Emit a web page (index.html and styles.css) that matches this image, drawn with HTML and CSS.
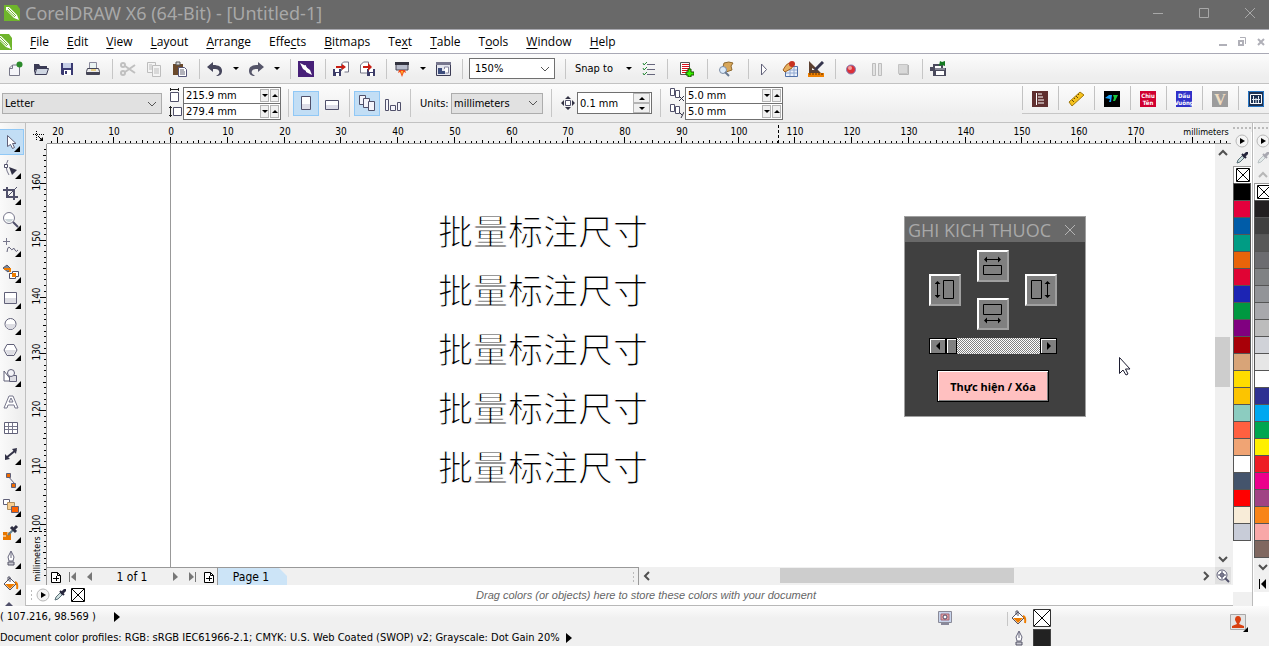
FILE: index.html
```html
<!DOCTYPE html>
<html lang="en">
<head>
<meta charset="UTF-8">
<meta name="viewport" content="width=device-width, initial-scale=1.0">
<title>CorelDRAW X6 (64-Bit) - [Untitled-1]</title>
<link rel="stylesheet" href="styles.css">
</head>
<body>

<!-- shared icons -->
<svg class="defs" width="0" height="0">
    <symbol id="logo" viewBox="0 0 16 16"><path d="M0 0H13L16 4V16H0z" fill="#6fb52c"/><path d="M2 2l3 0 8 8 2 5-5-2-8-8z" fill="#fff"/><path d="M4 3l8 8M3 5l8 7" stroke="#6fb52c" stroke-width="1"/></symbol>
    <symbol id="play" viewBox="0 0 14 14"><circle cx="7" cy="7" r="6" fill="#f4f4f4" stroke="#b8b8b8"/><path d="M5 4l5 3-5 3z" fill="#000"/></symbol>
    <symbol id="dropper" viewBox="0 0 14 14"><path d="M2 12l1-3 5-5 2 2-5 5z" fill="#cfe0e0" stroke="#5a7078"/><path d="M7 3l4 4M8 6l4-4" stroke="#26263c" stroke-width="2"/><path d="M8 4l3-3h2v2l-3 3z" fill="#26263c"/></symbol>
    <symbol id="nofill" viewBox="0 0 16 16"><path d="M1.500 1.500h13v13h-13z" fill="#fff" stroke="#000"/><path d="M2 2l12 12M14 2L2 14" stroke="#000"/></symbol>
    <symbol id="bucket" viewBox="0 0 16 16"><path d="M7 2l6 6-6 6-6-6z" fill="#fff" stroke="#555566"/><path d="M2 8h10l-5 5z" fill="#ef7d00"/><path d="M5 5V1h2v5" fill="none" stroke="#555566"/><path d="M12 6q3 1 2 7" fill="none" stroke="#ef7d00" stroke-width="2"/></symbol>
    <symbol id="pen" viewBox="0 0 16 16"><path d="M8 1l3 6-1 4H6L5 7z" fill="#fff" stroke="#66667c"/><path d="M8 2v6" stroke="#66667c"/><path d="M5 12h6v3H5z" fill="#c8c8d0" stroke="#555566"/></symbol>
    <symbol id="duplicate" viewBox="0 0 14 14"><path d="M.5.5h4v7h-4zM5.500 2.500h4v7h-4z" fill="#fff" stroke="#50506a"/></symbol>
    <symbol id="addpage" viewBox="0 0 12 12"><path d="M1.500 1.500h6l3 3v7h-9zM7.500 1.500v3h3" fill="#fff" stroke="#000"/><path d="M3 7.500h6M6.500 5v5" stroke="#000"/></symbol>
    <symbol id="chev" viewBox="0 0 10 10"><path d="M1 3l4 4 4-4" fill="none" stroke="currentColor" stroke-width="2"/></symbol>
</svg>

<!-- title bar -->
<header class="titlebar">
    <svg class="icon" viewBox="0 0 16 16"><use href="#logo"/></svg>
    <h1>CorelDRAW X6 (64-Bit) - [Untitled-1]</h1>
    <div class="win-buttons">
        <button aria-label="Minimize"><svg width="12" height="12"><path d="M1 6.500h10" stroke="#a8a8a8"/></svg></button>
        <button aria-label="Maximize"><svg width="12" height="12"><path d="M1.500 1.500h9v9h-9z" fill="none" stroke="#a8a8a8"/></svg></button>
        <button aria-label="Close"><svg width="12" height="12"><path d="M1 1l10 10M11 1L1 11" stroke="#a8a8a8"/></svg></button>
    </div>
</header>

<!-- menu -->
<nav class="menubar">
    <svg class="icon" viewBox="0 0 16 16"><use href="#logo"/></svg>
    <a href="#"><u>F</u>ile</a>
    <a href="#"><u>E</u>dit</a>
    <a href="#"><u>V</u>iew</a>
    <a href="#"><u>L</u>ayout</a>
    <a href="#"><u>A</u>rrange</a>
    <a href="#">Effe<u>c</u>ts</a>
    <a href="#"><u>B</u>itmaps</a>
    <a href="#">Te<u>x</u>t</a>
    <a href="#"><u>T</u>able</a>
    <a href="#">T<u>o</u>ols</a>
    <a href="#"><u>W</u>indow</a>
    <a href="#"><u>H</u>elp</a>
    <div class="doc-buttons">
        <button aria-label="Minimize document"><svg width="10" height="10"><path d="M1 8h8" stroke="#b0b0b8" stroke-width="2"/></svg></button>
        <button aria-label="Restore document"><svg width="10" height="10"><path d="M2 4h4v4H2z" fill="none" stroke="#b0b0b8" stroke-width="2"/><path d="M3 .5h5.500V7" fill="none" stroke="#b0b0b8"/></svg></button>
        <button aria-label="Close document"><svg width="10" height="10"><path d="M2 2l6 6M8 2L2 8" stroke="#b0b0b8" stroke-width="2"/></svg></button>
    </div>
</nav>

<!-- standard toolbar -->
<div class="toolbar">
    <button class="tool" aria-label="New"><svg class="icon" viewBox="0 0 16 16"><path d="M2.500 14.500V7l3-3h7v10.500z" fill="#f4f4f8" stroke="#777788"/><path d="M2.500 7.500h3V4" fill="none" stroke="#777788"/><circle cx="12.500" cy="3.500" r="3" fill="#2b8a2b"/></svg></button>
    <button class="tool" aria-label="Open"><svg class="icon" viewBox="0 0 16 16"><path d="M1 3h5l1 2h7v4H1z" fill="#3b3b55"/><path d="M1 3v10l2-6h11" fill="#3b3b55"/><path d="M3.500 7.500h12l-2 6H2z" fill="#cfd6e2" stroke="#3b3b55"/></svg></button>
    <button class="tool" aria-label="Save"><svg class="icon" viewBox="0 0 16 16"><path d="M2 2h12v12H3l-1-1z" fill="#3a3a72"/><path d="M4 2h8v5H4z" fill="#c5cee6"/><path d="M5 9h7v5H5z" fill="#fff"/><path d="M6 10h2v3H6z" fill="#3a3a72"/></svg></button>
    <button class="tool" aria-label="Print"><svg class="icon" viewBox="0 0 16 16"><path d="M4.500 8V1.500h7V8" fill="#eaf3f1" stroke="#8a8a9c"/><path d="M2.500 7.500h11l1 3v3h-13v-3z" fill="#ececec" stroke="#444455"/><path d="M2 12h12" stroke="#444455" stroke-width="2"/><path d="M6 9h5" stroke="#e0b020"/></svg></button>
    <span class="sep"></span>
    <button class="tool" aria-label="Cut"><svg class="icon" viewBox="0 0 16 16"><g fill="none" stroke="#c0c0c0" stroke-width="2"><circle cx="3" cy="4" r="2"/><circle cx="3" cy="12" r="2"/><path d="M5 5l10 7M5 11l10-7"/></g></svg></button>
    <button class="tool" aria-label="Copy"><svg class="icon" viewBox="0 0 16 16"><g fill="#f4f4f4" stroke="#bdbdbd"><path d="M1.500 1.500h8v10h-8z"/><path d="M6.500 4.500h8v11h-8z"/><path d="M3 4h3M3 6h3M3 8h3M8 8h5M8 10h5M8 12h5"/></g></svg></button>
    <button class="tool" aria-label="Paste"><svg class="icon" viewBox="0 0 16 16"><path d="M1 3h10v11H1z" fill="#6b4a2b"/><path d="M4 1h4v3H4z" fill="#ddd" stroke="#555"/><path d="M6.500 6.500h6l2 2v7h-8z" fill="#fff" stroke="#555577"/><path d="M8 9h4M8 11h5M8 13h5" stroke="#667"/></svg></button>
    <span class="sep"></span>
    <button class="tool" aria-label="Undo"><svg class="icon" viewBox="0 0 16 16"><path d="M0 6l6-5v3c6 0 9 2 9 6 0 3-2 5-6 5 3-2 4-3 3-5-1-2-3-2-6-2v3z" fill="#46465c"/></svg></button>
    <button class="drop" aria-label="Undo list"></button>
    <button class="tool" aria-label="Redo"><svg class="icon" viewBox="0 0 16 16"><path d="M16 6l-6-5v3c-6 0-9 2-9 6 0 3 2 5 6 5-3-2-4-3-3-5 1-2 3-2 6-2v3z" fill="#56566a"/></svg></button>
    <button class="drop" aria-label="Redo list"></button>
    <span class="sep"></span>
    <button class="tool" aria-label="Search content"><svg class="icon" viewBox="0 0 16 16"><path d="M0 0h16v16H0z" fill="#472078"/><path d="M2 2l6 3v5L5 8zM14 14l-6-3V6l4 3z" fill="#fff"/><path d="M7 4l4 8" stroke="#fff"/></svg></button>
    <span class="sep"></span>
    <button class="tool" aria-label="Import"><svg class="icon" viewBox="0 0 16 16"><path d="M8.500 10V3l2-2h5v10h-4" fill="#fff" stroke="#777788"/><path d="M0 8h8v7H0z" fill="#3c3c68"/><path d="M2 8h4v3H2zM3 12h3v3H3z" fill="#fff"/><path d="M3 5h6V3l4 3-4 3V7H3z" fill="#c81e14"/></svg></button>
    <button class="tool" aria-label="Export"><svg class="icon" viewBox="0 0 16 16"><path d="M1.500 12V4l3-3h5v11z" fill="#fff" stroke="#777788"/><path d="M8 8h8v7H8z" fill="#3c3c68"/><path d="M10 8h4v3h-4zM11 12h3v3h-3z" fill="#fff"/><path d="M4 5h5V2l4 4-4 4V7H4z" fill="#c81e14"/></svg></button>
    <span class="sep"></span>
    <button class="tool" aria-label="Application launcher"><svg class="icon" viewBox="0 0 16 16"><path d="M2 2h12v7H2z" fill="#b8bccb" stroke="#444455"/><path d="M1 1h14v3H1z" fill="#33333f"/><path d="M5 9h6l1 3-2-1-2 5-2-5-2 1z" fill="#f04818"/><path d="M7 10h2l-1 4z" fill="#ffc830"/></svg></button>
    <button class="drop" aria-label="Launcher list"></button>
    <button class="tool" aria-label="Welcome screen"><svg class="icon" viewBox="0 0 16 16"><path d="M1.500 1.500h14v13h-14z" fill="#e4e6ef" stroke="#3c3c55"/><path d="M1 1h15v3H1z" fill="#77778e"/><path d="M3 7h4v3h3v3H3z" fill="#3c4c7c"/><path d="M9.500 8V6h4v6h-3" fill="#fff" stroke="#8888a0"/></svg></button>
    <span class="sep"></span>
    <select class="zoom-level" aria-label="Zoom level"><option>150%</option></select>
    <span class="sep"></span>
    <button class="snap">Snap to</button>
    <button class="drop" aria-label="Snap list"></button>
    <button class="tool" aria-label="Options"><svg class="icon" viewBox="0 0 16 16"><path d="M6 3.500h8M6 8.500h8M6 13.500h8" stroke="#66667c"/><path d="M2 2l1 2 3-3M2 7l1 2 3-3M2 12l1 2 3-3" fill="none" stroke="#2b8a3a"/></svg></button>
    <span class="sep wide"></span>
    <button class="tool" aria-label="Add list"><svg class="icon" viewBox="0 0 16 16"><path d="M2.500 1.500h9v12h-9z" fill="#fff" stroke="#555"/><path d="M4 3.500h7M4 5.500h7M4 7.500h7M4 9.500h7M4 11.500h4" stroke="#d8101c"/><path d="M10 8h3v3h3v3h-3v2h-3v-2H8v-3h2z" fill="#36f000" stroke="#174a00"/></svg></button>
    <span class="sep wide"></span>
    <button class="tool" aria-label="Find script"><svg class="icon" viewBox="0 0 16 16"><path d="M6 2q5-2 9 0l-2 3 1 4-6 2-3-5z" fill="#d8a75a" stroke="#8f6a30"/><circle cx="5" cy="9" r="3.500" fill="#dcebfa" stroke="#7c8ca4"/><path d="M7 11l4 4" stroke="#667890" stroke-width="2"/></svg></button>
    <span class="sep"></span>
    <button class="tool" aria-label="Run macro"><svg class="icon" viewBox="0 0 16 16"><path d="M5.500 3v11l5-5.500z" fill="#fff" stroke="#606078"/></svg></button>
    <button class="tool" aria-label="Macro manager"><svg class="icon" viewBox="0 0 16 16"><path d="M3.500 5.500h12v10h-12z" fill="#eaf0fa" stroke="#5070a8"/><path d="M4 9h11M4 12h11M8 6v9M12 6v9" stroke="#90a8d0"/><path d="M1 9q3-6 6-7l4 1-1 4-7 4z" fill="#e8b060" stroke="#a06020"/><circle cx="10" cy="3" r="3" fill="#c83220"/></svg></button>
    <button class="tool" aria-label="Macro editor"><svg class="icon" viewBox="0 0 16 16"><path d="M1 0v12h12zM4 7v2h3z" fill="#5c4030" fill-rule="evenodd"/><path d="M7 9l8-8" stroke="#36364e" stroke-width="3"/><path d="M0 12h16v4H0z" fill="#ef8000"/><path d="M2 12v2M5 12v2M8 12v2M11 12v2M14 12v2" stroke="#603000"/></svg></button>
    <span class="sep"></span>
    <button class="tool" aria-label="Record"><svg class="icon" viewBox="0 0 16 16"><circle cx="8" cy="8.500" r="4.500" fill="#dd3038" stroke="#8080b8"/><circle cx="7" cy="7" r="2" fill="#f4a09c"/></svg></button>
    <button class="tool" aria-label="Pause"><svg class="icon" viewBox="0 0 16 16"><path d="M3.500 2.500h3v12h-3zM9.500 2.500h3v12h-3z" fill="#e2e2e2" stroke="#bdbdbd"/></svg></button>
    <button class="tool" aria-label="Stop"><svg class="icon" viewBox="0 0 16 16"><path d="M3.500 3.500h9v9h-9z" fill="#d8d8d8" stroke="#c4c4c4"/><path d="M13.500 4v9.500H4" fill="none" stroke="#b4b4b4"/></svg></button>
    <span class="sep"></span>
    <button class="tool" aria-label="Print batch"><svg class="icon" viewBox="0 0 16 16"><path d="M3 3h10v4h3v8H3z" fill="#4a4a5c"/><path d="M5 5h6v2H5zM6 10h8v4H6z" fill="#fff"/><path d="M0 8h3" stroke="#4a4a5c" stroke-width="4"/><path d="M5 8h10" stroke="#c4c4d0"/><path d="M10 0l2 1 3-1v5l-3-1-3 1z" fill="#157a22"/></svg></button>
</div>

<!-- property bar -->
<div class="propbar">
    <select class="paper" aria-label="Paper type"><option>Letter</option></select>
    <div class="pair-icons">
        <svg width="14" height="14"><path d="M2.500 4.500h8v9h-8z" fill="#fff" stroke="#50506a"/><path d="M2 1.500h9M2.500 0v3M10.500 0v3" stroke="#222"/></svg>
        <svg width="14" height="14"><path d="M5.500 3.500h8v8h-8z" fill="#fff" stroke="#50506a"/><path d="M2.500 2v11M1 3.500h3M1 11.500h3" stroke="#222"/></svg>
    </div>
    <div class="pair">
        <div class="spin"><input type="text" value="215.9 mm" aria-label="Page width"><button class="down" aria-label="Less"></button><button class="up" aria-label="More"></button></div>
        <div class="spin"><input type="text" value="279.4 mm" aria-label="Page height"><button class="down" aria-label="Less"></button><button class="up" aria-label="More"></button></div>
    </div>
    <span class="sep"></span>
    <button class="tool on" aria-label="Portrait"><svg class="icon" viewBox="0 0 16 16"><path d="M3.500 1.500h9v13h-9z" fill="#fff" stroke="#50506a"/><path d="M4 9h8v5H4z" fill="#dedee8"/></svg></button>
    <button class="tool" aria-label="Landscape"><svg class="icon" viewBox="0 0 16 16"><path d="M1.500 5.500h13v9h-13z" fill="#fff" stroke="#50506a"/><path d="M2 10h12v4H2z" fill="#dedee8"/></svg></button>
    <span class="sep"></span>
    <button class="tool on" aria-label="All pages"><svg class="icon" viewBox="0 0 16 16"><g fill="#f4f4fa" stroke="#50506a"><path d="M.5.5h6v9h-6z"/><path d="M4.500 3.500h6v9h-6z"/><path d="M9.500 6.500h6v9h-6z"/></g></svg></button>
    <button class="tool" aria-label="Current page"><svg class="icon" viewBox="0 0 16 16"><g fill="#f4f4fa" stroke="#50506a"><path d="M.5 4.500h3v11h-3z"/><path d="M5.500 10.500h5v5h-5z"/><path d="M12.500 7.500h3v8h-3z"/></g></svg></button>
    <span class="sep"></span>
    <label class="units-label" for="units">Units:</label>
    <select class="units" id="units"><option>millimeters</option></select>
    <span class="sep"></span>
    <svg class="nudge-icon" width="14" height="14"><path d="M4.500 4.500h5v5h-5z" fill="#fff" stroke="#50506a"/><path d="M7 0l3 3H4zM7 14l3-3H4zM0 7l3-3v6zM14 7l-3-3v6z" fill="#333344"/></svg>
    <div class="spin nudge"><input type="text" value="0.1 mm" aria-label="Nudge offset"><div class="stack"><button class="up" aria-label="More"></button><button class="down" aria-label="Less"></button></div></div>
    <span class="sep"></span>
    <div class="pair-icons">
        <svg width="14" height="14"><use href="#duplicate" width="14" height="14"/><path d="M9 8l5 5M14 8l-5 5" stroke="#333344"/></svg>
        <svg width="14" height="14"><use href="#duplicate" width="14" height="14"/><path d="M9 8l3 3M14 8l-3 6" stroke="#333344"/></svg>
    </div>
    <div class="pair">
        <div class="spin"><input type="text" value="5.0 mm" aria-label="Duplicate x"><button class="down" aria-label="Less"></button><button class="up" aria-label="More"></button></div>
        <div class="spin"><input type="text" value="5.0 mm" aria-label="Duplicate y"><button class="down" aria-label="Less"></button><button class="up" aria-label="More"></button></div>
    </div>

    <div class="macros">
        <button aria-label="Report"><svg class="icon" viewBox="0 0 16 16"><path d="M0 0h16v16H0z" fill="#603030"/><path d="M4.500 2v12M6 3h4M6 6h5M6 9h6M6 12h6" stroke="#fff"/></svg></button>
        <button aria-label="Ruler"><svg class="icon" viewBox="0 0 16 16"><path d="M1 11L12 1l4 3L4 15z" fill="#f6c21c" stroke="#a07810"/><path d="M4 9l2 2M6 7l1 1M8 5l2 2M10 3l1 1" stroke="#6a4c00"/></svg></button>
        <button aria-label="Convert"><svg class="icon" viewBox="0 0 16 16"><path d="M0 0h16v16H0z" fill="#000"/><path d="M1 7l4-3h3l-1 7H5l1-3z" fill="#18a0f8"/><path d="M9 4h5l-3 6H9l1-3z" fill="#18c83c"/></svg></button>
        <button class="tile red">Chìu<br>Tên</button>
        <button class="tile blue">Dấu<br>Vuông</button>
        <button class="tile grey">V</button>
        <button aria-label="Barcode"><svg class="icon" viewBox="0 0 16 16"><path d="M0 0h16v16H0z" fill="#1c3050"/><path d="M.5.5h15v15H.5z" fill="none" stroke="#2878c8"/><path d="M2.500 3.500h11v9h-11z" fill="none" stroke="#fff"/><path d="M5.500 5v7M8 7v5M10.500 5v7M4 8.500h8" stroke="#e0e8f0"/></svg></button>
    </div>
</div>

<main class="workspace">
    <!-- toolbox -->
    <div class="toolbox">
        <button class="on fly" aria-label="Pick"><svg class="icon" viewBox="0 0 16 16"><path d="M4.500 1.500v11l3-2 2 4 2-1-2-4h3.500z" fill="#fff" stroke="#606078"/></svg></button>
        <button class="fly" aria-label="Shape"><svg class="icon" viewBox="0 0 16 16"><path d="M5 0Q1 7 6 15" fill="none" stroke="#77778c"/><path d="M1.500 4.500h3v3h-3z" fill="#fff" stroke="#50506a"/><path d="M6 7l8 3-5 5z" fill="#333348"/></svg></button>
        <button class="fly" aria-label="Crop"><svg class="icon" viewBox="0 0 16 16"><path d="M0 4h11v10M4 1v10h11" fill="none" stroke="#50506a" stroke-width="2"/><path d="M4 11l10-10" stroke="#50506a"/></svg></button>
        <button class="fly" aria-label="Zoom"><svg class="icon" viewBox="0 0 16 16"><circle cx="6" cy="6" r="5.500" fill="#fff" stroke="#77778c"/><path d="M2 7h8q-1 3-4 3T2 7" fill="#cdd6da"/><path d="M10 10l5 5" stroke="#50506a" stroke-width="2"/></svg></button>
        <button class="fly" aria-label="Freehand"><svg class="icon" viewBox="0 0 16 16"><path d="M3.500 0v7M0 3.500h7" stroke="#77778c"/><path d="M4 14q1-7 3-4t3 1 2 1 3 0" fill="none" stroke="#606078"/></svg></button>
        <button class="fly" aria-label="Smart fill"><svg class="icon" viewBox="0 0 16 16"><path d="M0 4l4-3 4 4-3 3z" fill="#7c8898" stroke="#555566"/><path d="M1 5h6v3" fill="none" stroke="#ef7d00" stroke-width="2"/><path d="M6.500 9.500h6v5h-6zM9.500 7.500h6v5h-6z" fill="#fff" stroke="#50506a"/><path d="M9 9h4v4H9z" fill="#ef7d00"/></svg></button>
        <button class="fly" aria-label="Rectangle"><svg class="icon" viewBox="0 0 16 16"><path d="M1.500 2.500h12v11h-12z" fill="#fff" stroke="#606078"/><path d="M2 8h11v5H2z" fill="#dedee4"/></svg></button>
        <button class="fly" aria-label="Ellipse"><svg class="icon" viewBox="0 0 16 16"><circle cx="7.500" cy="8" r="5.500" fill="#fff" stroke="#606078"/><path d="M2.500 8h10q0 5-5 5t-5-5" fill="#dedee4"/></svg></button>
        <button class="fly" aria-label="Polygon"><svg class="icon" viewBox="0 0 16 16"><path d="M4 2.500h7l3 5.500-3 5.500H4L1 8z" fill="#fff" stroke="#606078"/><path d="M2 8h11l-3 5H5z" fill="#dedee4"/></svg></button>
        <button class="fly" aria-label="Basic shapes"><svg class="icon" viewBox="0 0 16 16"><path d="M1 3v10h8z" fill="#fff" stroke="#606078"/><path d="M6.500 7.500h7v6h-7z" fill="#dedee4" stroke="#606078"/><circle cx="8" cy="5" r="3.500" fill="#f4f4f8" stroke="#606078"/></svg></button>
        <button aria-label="Text"><svg class="icon" viewBox="0 0 16 16"><path d="M1 14L6 2h4l5 12h-3l-1-3H5l-1 3zM6 8h4L8 4z" fill="#fff" stroke="#77778c" fill-rule="evenodd"/></svg></button>
        <button aria-label="Table"><svg class="icon" viewBox="0 0 16 16"><path d="M1.500 2.500h13v11h-13z" fill="#fff" stroke="#606078"/><path d="M2 6.500h12M2 9.500h12M5.500 3v10M9.500 3v10" stroke="#77778c"/></svg></button>
        <button class="fly" aria-label="Dimension"><svg class="icon" viewBox="0 0 16 16"><path d="M3 12l10-8" stroke="#333348" stroke-width="2"/><path d="M2 8l5 5-5 1zM9 3l5-1-1 6z" fill="#333348"/></svg></button>
        <button class="fly" aria-label="Connector"><svg class="icon" viewBox="0 0 16 16"><path d="M4 3l8 9" stroke="#606078"/><path d="M3.500 1.500h4v4h-4zM8.500 11.500h4v4h-4z" fill="#ef6a00" stroke="#606078"/></svg></button>
        <button class="fly" aria-label="Blend"><svg class="icon" viewBox="0 0 16 16"><path d="M.5 1.500h6v5h-6z" fill="#fff" stroke="#606078"/><path d="M4.500 4.500h7v7h-7z" fill="#f8cf90" stroke="#b09060"/><path d="M8.500 8.500h7v6h-7z" fill="#ff6200" stroke="#606078"/></svg></button>
        <button class="fly" aria-label="Eyedropper"><svg class="icon" viewBox="0 0 16 16"><path d="M0 8h8v8H0z" fill="#e87800"/><path d="M0 12h3M5 8v3" stroke="#fff"/><path d="M5 11l6-6" stroke="#66808c" stroke-width="2"/><path d="M8 3l5 5M10 6l4-4" stroke="#2c2c40" stroke-width="3"/></svg></button>
        <button class="fly" aria-label="Outline"><svg class="icon" viewBox="0 0 16 16"><use href="#pen"/></svg></button>
        <button class="fly" aria-label="Fill"><svg class="icon" viewBox="0 0 16 16"><use href="#bucket"/></svg></button>
        <button class="fly" aria-label="Interactive fill"><svg class="icon" viewBox="0 0 16 16"><path d="M6 0l4 4-4 4-4-4z" fill="#50506a"/></svg></button>
    </div>

    <!-- document window -->
    <div class="doc">
        <div class="origin"><svg width="12" height="12"><path d="M3.500 0v9M0 3.500h11" stroke="#000" stroke-dasharray="1 1"/><path d="M5 5l5 5" stroke="#000"/><path d="M10 6v4H6z" fill="#000"/></svg></div>
        <div class="ruler-h" id="rulerH"></div>
        <div class="ruler-v" id="rulerV"></div>

        <div class="canvas">
            <div class="texts">
                <p>批量标注尺寸</p>
                <p>批量标注尺寸</p>
                <p>批量标注尺寸</p>
                <p>批量标注尺寸</p>
                <p>批量标注尺寸</p>
            </div>

            <!-- macro window -->
            <div class="dialog">
                <div class="dialog-title">
                    <h2>GHI KICH THUOC</h2>
                    <button aria-label="Close"><svg width="10" height="10"><path d="M0 0l10 10M10 0L0 10" stroke="#b4b4b4"/></svg></button>
                </div>
                <div class="dialog-body">
                    <div class="sides">
                        <button class="top" aria-label="Top"><svg width="20" height="20"><path d="M.5 9.500h18v9H.5z" fill="none" stroke="#000"/><path d="M3 3.500h13" stroke="#000"/><path d="M1 3.500l3-3v6zM18 3.500l-3-3v6z"/></svg></button>
                        <button class="left" aria-label="Left"><svg width="20" height="20"><path d="M8.500 .5h10v18h-10z" fill="none" stroke="#000"/><path d="M2.500 3v13" stroke="#000"/><path d="M2.500 1l-3 3h6zM2.500 18l-3-3h6z"/></svg></button>
                        <button class="right" aria-label="Right"><svg width="20" height="20"><path d="M.5 .5h10v18H.5z" fill="none" stroke="#000"/><path d="M16.500 3v13" stroke="#000"/><path d="M16.500 1l-3 3h6zM16.500 18l-3-3h6z"/></svg></button>
                        <button class="bottom" aria-label="Bottom"><svg width="20" height="20"><path d="M.5 .5h18v10H.5z" fill="none" stroke="#000"/><path d="M3 16.500h13" stroke="#000"/><path d="M1 16.500l3-3v6zM18 16.500l-3-3v6z"/></svg></button>
                    </div>
                    <div class="slider">
                        <button aria-label="Less"><svg width="6" height="8"><path d="M5 0v8L1 4z"/></svg></button>
                        <span class="knob"></span>
                        <span class="track"></span>
                        <button aria-label="More"><svg width="6" height="8"><path d="M1 0v8l4-4z"/></svg></button>
                    </div>
                    <button class="run">Thực hiện / Xóa</button>
                </div>
            </div>
            <svg class="cursor" width="13" height="20"><path d="M1.500 1.500v16l3.500-3.500 3 5 2-1-2.500-5H12z" fill="#fff" stroke="#1c1c30"/></svg>
        </div>

        <div class="vscroll">
            <button aria-label="Scroll up"><svg class="flip" width="10" height="10"><use href="#chev"/></svg></button>
            <span class="before"></span><span class="thumb"></span><span class="after"></span>
            <button aria-label="Scroll down"><svg width="10" height="10"><use href="#chev"/></svg></button>
        </div>

        <div class="bottom-row">
            <div class="pages">
                <button aria-label="Add page before"><svg width="12" height="12"><use href="#addpage"/></svg></button>
                <button aria-label="First page"><svg width="10" height="10"><path d="M1.500 0v10" stroke="#777"/><path d="M8 0v9L3 5z" fill="#777"/></svg></button>
                <button aria-label="Previous page"><svg width="10" height="10"><path d="M7 0v9L2 5z" fill="#777"/></svg></button>
                <span class="count">1 of 1</span>
                <button aria-label="Next page"><svg width="10" height="10"><path d="M3 0v9l5-4z" fill="#777"/></svg></button>
                <button aria-label="Last page"><svg width="10" height="10"><path d="M8.500 0v10" stroke="#777"/><path d="M2 0v9l5-4z" fill="#777"/></svg></button>
                <button aria-label="Add page after"><svg width="12" height="12"><use href="#addpage"/></svg></button>
                <button class="tab">Page 1</button>
                <span class="grip"></span>
            </div>
            <div class="hscroll">
                <button aria-label="Scroll left"><svg class="turn-left" width="10" height="10"><use href="#chev"/></svg></button>
                <span class="before"></span><span class="thumb"></span><span class="after"></span>
                <button aria-label="Scroll right"><svg class="turn-right" width="10" height="10"><use href="#chev"/></svg></button>
            </div>
        </div>
        <button class="navigator" aria-label="Navigator"><svg width="14" height="14"><circle cx="6" cy="6" r="5" fill="#fff" stroke="#606078"/><circle cx="6" cy="6" r="2" fill="none" stroke="#50506a"/><path d="M6 2v8M2 6h8" stroke="#50506a"/><path d="M9 9l4 4" stroke="#50506a" stroke-width="2"/></svg></button>

        <div class="doc-palette">
            <span class="grip"></span>
            <button aria-label="Palette menu"><svg width="14" height="14"><use href="#play"/></svg></button>
            <button aria-label="Eyedropper"><svg width="14" height="14"><use href="#dropper"/></svg></button>
            <button aria-label="No color"><svg width="16" height="16"><use href="#nofill"/></svg></button>
            <em>Drag colors (or objects) here to store these colors with your document</em>
        </div>
    </div>

    <!-- palettes -->
    <div class="palette" id="palette1">
        <span class="dots"></span>
        <button class="pal-btn" aria-label="Palette menu"><svg width="14" height="14"><use href="#play"/></svg></button>
        <button class="pal-btn" aria-label="Eyedropper"><svg width="14" height="14"><use href="#dropper"/></svg></button>
        <button class="none" aria-label="No color"><svg width="16" height="16"><use href="#nofill"/></svg></button>
        <div class="swatches"></div>
        <span class="pal-end"></span>
    </div>
    <div class="palette second" id="palette2">
        <span class="dots"></span>
        <button class="pal-btn" aria-label="Palette menu"><svg width="14" height="14"><use href="#play"/></svg></button>
        <button class="pal-btn faded" aria-label="Eyedropper"><svg width="14" height="14"><use href="#dropper"/></svg></button>
        <button class="pal-btn faded" aria-label="Palette up"><svg class="flip" width="10" height="10"><use href="#chev"/></svg></button>
        <button class="none" aria-label="No color"><svg width="16" height="16"><use href="#nofill"/></svg></button>
        <div class="swatches"></div>
        <button class="pal-btn" aria-label="Palette down"><svg width="10" height="10"><use href="#chev"/></svg></button>
        <button class="pal-btn" aria-label="Expand palette"><svg width="10" height="10"><path d="M1.500 0v10" stroke="#000"/><path d="M8 0v10L3 5z"/></svg></button>
    </div>
</main>

<!-- status bar -->
<footer class="status">
    <div class="status-text">
        <p>( 107.216, 98.569 )<svg class="coords-arrow" width="6" height="10"><path d="M0 0l6 5-6 5z"/></svg></p>
        <p>Document color profiles: RGB: sRGB IEC61966-2.1; CMYK: U.S. Web Coated (SWOP) v2; Grayscale: Dot Gain 20%<svg class="profile-arrow" width="6" height="10"><path d="M0 0l6 5-6 5z"/></svg></p>
    </div>
    <div class="status-proof"><svg width="14" height="14"><path d="M.5.5h13v11H.5z" fill="#c8d4ec" stroke="#8a8a98"/><path d="M3 3h8v6H3z" fill="#e8a0a0" stroke="#a06878"/><circle cx="7" cy="6" r="2" fill="#fff" stroke="#446"/><path d="M3 13h8" stroke="#88889a" stroke-width="2"/></svg></div>
    <div class="status-fill">
        <svg width="16" height="16"><use href="#bucket"/></svg>
        <svg width="18" height="18"><path d="M.5.5h17v17H.5z" fill="#fff" stroke="#333"/><path d="M1 1l16 16M17 1L1 17" stroke="#000"/></svg>
        <svg width="16" height="16"><use href="#pen"/></svg>
        <span class="outline-swatch"></span>
    </div>
    <div class="status-user"><svg width="18" height="18"><path d="M.5.5h15v15H.5z" fill="#e4e4e4" stroke="#a8a8a8"/><path d="M8 2q3 0 3 4l-2 4 5 2v2H2v-2l5-2-2-4q0-4 3-4" fill="#d84010"/><path d="M18 13v5h-5z"/></svg></div>
</footer>

<script src="script.js"></script>
</body>
</html>
```

FILE: styles.css
```css
* {
    box-sizing: border-box;
}
body {
    margin: 0;
    height: 100vh;
    display: flex;
    flex-direction: column;
    overflow: hidden;
    background-color: #f0f0f0;
    color: #000;
    font-family: "DejaVu Sans Condensed", Tahoma, "Noto Sans", sans-serif;
    font-size: 11px;
}
h1, h2, p {
    margin: 0;
    font-weight: normal;
}
button {
    display: flex;
    align-items: center;
    justify-content: center;
    flex-shrink: 0;
    margin: 0;
    padding: 0;
    border: none;
    background: none;
    font: inherit;
    color: inherit;
}
svg {
    display: block;
    flex-shrink: 0;
}
.defs {
    position: absolute;
}
.icon {
    width: 16px;
    height: 16px;
}
.flip {
    transform: rotate(180deg);
}
.turn-left {
    transform: rotate(90deg);
}
.turn-right {
    transform: rotate(-90deg);
}

/* title bar */
.titlebar {
    display: flex;
    align-items: center;
    height: 30px;
    flex-shrink: 0;
    padding: 0 6px 3px 4px;
    background-color: #696969;
    border-bottom: 1px solid #a9a9b0;
    color: #a8a8a8;
}
.titlebar h1 {
    flex: 1;
    margin-left: 5px;
    font-family: "Noto Sans", sans-serif;
    font-size: 18px;
    line-height: 26px;
}
.win-buttons {
    display: flex;
    gap: 19px;
}
.win-buttons button {
    width: 27px;
    height: 26px;
}

/* menu */
.menubar {
    display: flex;
    align-items: center;
    gap: 18px;
    height: 24px;
    flex-shrink: 0;
    background-color: #fff;
    border-bottom: 1px solid #a9a9b5;
    font-family: "Open Sans", "Noto Sans", sans-serif;
    font-size: 12px;
}
.menubar .icon {
    margin-left: -4px;
}
.menubar a {
    color: #000;
    text-decoration: none;
    line-height: 18px;
}
.menubar u {
    text-underline-offset: 2px;
}
.doc-buttons {
    display: flex;
    gap: 9px;
    margin-left: auto;
    padding-right: 3px;
}

/* toolbars */
.toolbar, .propbar {
    display: flex;
    flex-shrink: 0;
    background: linear-gradient(#fcfcfc, #eee 80%);
    border-bottom: 1px solid #c2c2c2;
}
.toolbar {
    align-items: center;
    height: 30px;
    padding-left: 2px;
}
.propbar {
    align-items: center;
    height: 39px;
    padding-left: 2px;
}
.tool {
    width: 26px;
    height: 25px;
}
.tool.on {
    background-color: #c2def5;
    border: 1px solid #90c8f6;
}
.drop {
    width: 15px;
    height: 25px;
}
.drop::after {
    content: "";
    border: 3px solid transparent;
    border-top-color: #000;
    border-bottom: none;
}
.sep {
    width: 1px;
    height: 20px;
    flex-shrink: 0;
    margin: 0 2px 0 6px;
    background-color: #c6c6c6;
}
.sep.wide {
    margin: 0 5px;
}
.sep.wide + .tool {
    margin-right: 3px;
}
.propbar .sep {
    height: 28px;
    margin: 0 4px 0 7px;
}
.propbar .tool + .sep {
    margin: 0 4px;
}
.snap {
    width: 38px;
    margin: 0 8px 0 7px;
    white-space: nowrap;
}

/* form controls */
select {
    appearance: none;
    flex-shrink: 0;
    margin: 0;
    border-radius: 0;
    color: #000;
    font: inherit;
    background: url("data:image/svg+xml,%3Csvg xmlns='http://www.w3.org/2000/svg' width='10' height='6'%3E%3Cpath d='M1 1l4 4 4-4' fill='none' stroke='%23555'/%3E%3C/svg%3E") no-repeat right 4px center #e1e1e1;
    border: 1px solid #adadad;
}
.zoom-level {
    width: 86px;
    height: 21px;
    margin: 0 4px;
    padding-left: 5px;
    background-color: #fff;
    border-color: #707070;
}
.paper {
    width: 160px;
    height: 21px;
    margin-top: 1px;
    padding-left: 2px;
}
.units {
    width: 92px;
    height: 21px;
    margin-right: 1px;
    padding-left: 2px;
}
.units-label {
    width: 31px;
    margin-left: 5px;
    white-space: nowrap;
}
.pair-icons {
    display: flex;
    flex-direction: column;
    gap: 2px;
    margin: 0 1px 0 6px;
}
.propbar .sep + .pair-icons {
    margin-left: 5px;
}
.pair {
    width: 98px;
    flex-shrink: 0;
    border: 1px solid #707070;
}
.spin {
    display: flex;
    align-items: center;
    height: 15px;
    background-color: #fff;
}
.pair .spin + .spin {
    height: 16px;
    border-top: 1px solid #707070;
}
.spin input {
    flex: 1;
    min-width: 0;
    height: 14px;
    padding: 0 0 0 2px;
    border: none;
    outline: none;
    background: none;
    font: inherit;
}
.spin button {
    width: 9px;
    height: 13px;
    margin-right: 1px;
    background-color: #f0f0f0;
    border: 1px solid #b4b4b4;
}
.down::after, .up::after {
    content: "";
    border: 3px solid transparent;
}
.down::after {
    border-top-color: #000;
    border-bottom: none;
}
.up::after {
    border-bottom-color: #000;
    border-top: none;
}
.spin.nudge {
    width: 75px;
    height: 22px;
    margin-right: 1px;
    border: 1px solid #707070;
}
.spin.nudge button {
    width: 17px;
    height: 10px;
}
.nudge-icon {
    margin: 0 2px 0 5px;
}

/* macro buttons */
.macros {
    display: flex;
    align-self: flex-start;
    margin-left: auto;
    border-bottom: 1px solid #c6c6c6;
}
.macros button {
    position: relative;
    width: 36px;
    height: 29px;
}
.macros button:last-child {
    width: 31px;
    padding-left: 4px;
}
.macros button::before {
    content: "";
    position: absolute;
    left: 0;
    top: 2px;
    width: 1px;
    height: 24px;
    background-color: #c2c2c2;
}
.macros .tile {
    width: 16px;
    height: 16px;
    margin: 7px 10px 6px;
    color: #fff;
    font-size: 6px;
    font-weight: bold;
    line-height: 7px;
}
.macros .tile::before {
    left: -10px;
    top: -5px;
}
.red {
    background-color: #d00030;
}
.blue {
    background-color: #3030c8;
}
.macros .grey {
    background-color: #9c9c9c;
    color: #f0dcc0;
    font-family: "Liberation Serif", serif;
    font-size: 16px;
}

/* workspace */
.workspace {
    display: flex;
    flex: 1;
    min-height: 0;
}
.toolbox {
    width: 26px;
    flex-shrink: 0;
    padding-top: 6px;
    overflow: hidden;
    background: linear-gradient(to right, #fafafa, #eee 80%);
    border-right: 1px solid #c0c0c0;
}
.toolbox button {
    position: relative;
    width: 24px;
    height: 26px;
    padding-right: 2px;
}
.toolbox .on {
    background-color: #c2def5;
    border: 1px solid #90c8f6;
    border-left: none;
}
.fly::after {
    content: "";
    position: absolute;
    right: 3px;
    bottom: 2px;
    border: 3px solid #000;
    border-top-color: transparent;
    border-left-color: transparent;
}
.doc {
    flex: 1;
    min-width: 0;
    display: grid;
    grid-template-columns: 21px 1fr 18px;
    grid-template-rows: 21px 1fr 18px 21px;
}
.origin {
    padding: 8px 0 0 7px;
}
.ruler-h {
    grid-column: 2 / 4;
    overflow: hidden;
    border-bottom: 1px solid #999;
    margin-right: 2px;
}
.ruler-v {
    grid-row: 2 / 4;
    overflow: hidden;
    border-right: 1px solid #999;
}
.ruler-h text, .ruler-v text {
    font-size: 10px;
    text-anchor: middle;
}
.ruler-h .unit, .ruler-v .unit {
    font-size: 9px;
}
.canvas {
    grid-column: 2;
    grid-row: 2;
    position: relative;
    overflow: hidden;
    background: linear-gradient(#999, #999) 123px 0 / 1px 100% no-repeat #fff;
}
/* the stroke in the page colour thins the glyphs */
.texts {
    padding: 56px 0 0 391px;
    font-family: "Noto Sans CJK SC", sans-serif;
    font-size: 35px;
    font-weight: 100;
    line-height: 59px;
    -webkit-text-stroke: 1px #fff;
}

/* scroll bars */
.vscroll, .hscroll {
    display: flex;
    background-color: #f0f0f0;
    color: #505050;
}
.vscroll {
    flex-direction: column;
    padding-right: 3px;
}
.vscroll button, .hscroll button {
    width: 15px;
    height: 17px;
}
.thumb {
    background-color: #cdcdcd;
}
.vscroll .before {
    flex: 176;
}
.vscroll .thumb {
    flex: 50;
}
.vscroll .after {
    flex: 163;
}
.hscroll {
    flex: 32;
    padding-right: 2px;
}
.hscroll .before {
    flex: 125;
}
.hscroll .thumb {
    flex: 234;
    height: 15px;
    margin-top: 1px;
}
.hscroll .after {
    flex: 184;
}

/* page navigator */
.bottom-row {
    display: flex;
    min-width: 0;
    grid-column: 2;
    grid-row: 3;
}
.pages {
    flex: 33;
    display: flex;
    align-items: center;
    border-top: 1px solid #999;
    border-right: 1px solid #999;
}
.pages button {
    width: 17px;
    height: 17px;
}
.count {
    width: 68px;
    text-align: center;
    font-size: 12px;
}
.pages .tab {
    width: 70px;
    padding-right: 3px;
    background-color: #cce4f7;
    border-left: 1px solid #999;
    clip-path: polygon(0 0, 62px 0, 100% 8px, 100% 100%, 0 100%);
    font-size: 12px;
}
.grip {
    width: 3px;
    height: 12px;
    background: radial-gradient(#bbb 1px, transparent 1px) 0 0 / 3px 4px;
}
.pages .grip {
    margin: 0 3px 0 auto;
}
.navigator {
    width: 16px;
    height: 17px;
    background-color: #e0e0e0;
    grid-column: 3;
    grid-row: 3;
}
.doc-palette {
    grid-column: 1 / 4;
    grid-row: 4;
    display: flex;
    align-items: center;
    gap: 3px;
    padding-left: 4px;
    background-color: #fff;
    border-bottom: 1px solid #b8b8b8;
}
.doc-palette em {
    flex: 1;
    padding-right: 30px;
    text-align: center;
    color: #666;
    font-family: "Liberation Sans", Arial, sans-serif;
    font-size: 11px;
}

/* macro window */
.dialog {
    position: absolute;
    left: 857px;
    top: 72px;
    width: 182px;
    height: 201px;
    border: 1px solid #a0a0a0;
    background-color: #404040;
}
.dialog-title {
    display: flex;
    align-items: center;
    justify-content: space-between;
    height: 25px;
    padding: 0 10px 0 3px;
    background-color: #696969;
    color: #a8a8a8;
}
.dialog-title h2 {
    font-family: "Open Sans", "Noto Sans", sans-serif;
    font-size: 18px;
    line-height: 24px;
    white-space: nowrap;
}
.dialog-body {
    display: flex;
    flex-direction: column;
    align-items: center;
    padding: 8px 4px 0 0;
}
.sides {
    display: grid;
    grid-template-columns: repeat(3, 32px);
    grid-template-rows: repeat(10, 8px);
    column-gap: 16px;
}
.sides button {
    width: 32px;
    height: 32px;
    background-color: #808080;
    border: 2px solid;
    border-color: #fff #a0a0a0 #a0a0a0 #fff;
}
.top {
    grid-area: 1 / 2 / 5;
}
.left {
    grid-area: 4 / 1 / 8;
}
.right {
    grid-area: 4 / 3 / 8;
}
.bottom {
    grid-area: 7 / 2 / 11;
}
.slider {
    display: flex;
    width: 128px;
    height: 16px;
    margin-top: 8px;
}
.slider button, .knob {
    width: 17px;
    background-color: #808080;
    border: 1px solid;
    border-color: #fff #000 #000 #fff;
    outline: 1px solid #000;
    outline-offset: -1px;
    box-shadow: inset 1px 1px #fff;
}
.slider .knob {
    width: 11px;
}
.track {
    flex: 1;
    background: repeating-conic-gradient(#808080 0 25%, #fff 0 50%) 0 0 / 2px 2px;
}
.run {
    width: 112px;
    height: 32px;
    margin-top: 16px;
    background-color: #ffc0c0;
    border: 1px solid #000;
    box-shadow: inset 1px 1px #fff, inset -1px -1px #808080;
    font-family: "Noto Sans", sans-serif;
    font-size: 11px;
    font-weight: bold;
}
.cursor {
    position: absolute;
    left: 1071px;
    top: 212px;
}

/* palettes */
.palette {
    display: flex;
    flex-direction: column;
    width: 20px;
    flex-shrink: 0;
    overflow: hidden;
    background-color: #fff;
    border-right: 1px solid #bbb;
}
.palette.second {
    width: 16px;
    padding-left: 1px;
    border-right: none;
}
.dots {
    height: 9px;
    flex-shrink: 0;
    background: radial-gradient(#bbb 1px, transparent 1px) 3px 3px / 4px 4px repeat-x #f0f0f0;
}
.pal-btn {
    width: 18px;
    height: 17px;
    background-color: #f0f0f0;
    color: #505050;
}
.pal-btn.faded svg {
    opacity: 0.35;
}
.none {
    width: 18px;
    height: 17px;
    border-top: 1px solid #999;
    border-left: 1px solid #999;
}
.swatches {
    width: 18px;
    flex-shrink: 0;
    border-bottom: 1px solid #555;
}
.swatches button {
    width: 18px;
    height: 17px;
    border: 1px solid #555;
    border-bottom: none;
}
.pal-end {
    height: 14px;
    margin-top: auto;
    background-color: #f0f0f0;
}

/* status bar */
.status {
    display: flex;
    flex-shrink: 0;
    height: 40px;
    background: linear-gradient(#fcfcfc, #f0f0f0 12px);
}
.status-text {
    flex: 1;
    min-width: 0;
}
.status-text p {
    display: flex;
    align-items: center;
    height: 21px;
    white-space: nowrap;
}
.coords-arrow {
    margin-left: 18px;
}
.profile-arrow {
    margin-left: 6px;
}
.status-proof {
    width: 69px;
    padding-top: 5px;
}
.status-fill {
    display: grid;
    grid-template-columns: 16px 18px;
    grid-template-rows: 18px 18px;
    gap: 2px 6px;
    align-items: center;
    align-content: start;
    width: 223px;
    padding: 3px 0 0 4px;
    background: linear-gradient(#c6c6c6, #c6c6c6) 0 6px / 1px 14px no-repeat;
}
.outline-swatch {
    height: 18px;
    background-color: #222;
    border: 1px solid #444;
}
.status-user {
    width: 39px;
    padding-top: 8px;
}
```

FILE: script.js
```js
const SVG = "http://www.w3.org/2000/svg";
const STEP = 56.75; // pixels per 10 mm at 150%

function node(parent, tag, attrs, text) {
    const el = document.createElementNS(SVG, tag);
    for (const key in attrs) el.setAttribute(key, attrs[key]);
    if (text) el.textContent = text;
    parent.appendChild(el);
    return el;
}

// length of a tick: long every 10 mm, middle every 5 mm
function tickSize(mm) {
    if (mm % 10 === 0) return 6;
    return mm % 5 === 0 ? 3 : 2;
}

function drawHorizontal() {
    const box = document.getElementById("rulerH");
    const width = box.clientWidth;
    const svg = node(box, "svg", { width: width, height: 20 });
    const zero = 123;
    const last = Math.floor((width - zero) / STEP) * 10;
    let d = "";
    for (let mm = -21; zero + mm * STEP / 10 < width; mm++) {
        const x = Math.round(zero + mm * STEP / 10);
        d += `M${x + 0.5} ${20 - tickSize(mm)}V20`;
        if (mm % 10 === 0 && mm < last) {
            node(svg, "text", { x: x + 1, y: 12 }, String(Math.abs(mm)));
        }
    }
    node(svg, "path", { d: d, stroke: "#000" });
    node(svg, "text", { class: "unit", x: width - 25, y: 12 }, "millimeters");
    node(svg, "path", { d: "M731.5 2V20", stroke: "#000", "stroke-dasharray": "3 2" });
}

function drawVertical() {
    const box = document.getElementById("rulerV");
    const height = box.clientHeight;
    const svg = node(box, "svg", { width: 20, height: height });
    let d = "";
    for (let mm = 166; mm > 90; mm--) {
        const y = Math.round(39 + (160 - mm) * STEP / 10);
        if (y >= height) break;
        d += `M${20 - tickSize(mm)} ${y + 0.5}H20`;
        if (mm % 10 === 0) {
            node(svg, "text", { transform: `translate(14 ${y - 1}) rotate(-90)` }, String(mm));
        }
    }
    node(svg, "path", { d: d, stroke: "#000" });
    node(svg, "text", { class: "unit", transform: `translate(14 ${height - 26}) rotate(-90)` }, "millimeters");
    node(svg, "path", { d: "M3 387.5H20", stroke: "#000", "stroke-dasharray": "3 2" });
}

function fillPalette(id, colors) {
    const box = document.querySelector("#" + id + " .swatches");
    colors.forEach(color => {
        const button = document.createElement("button");
        button.style.backgroundColor = color;
        button.setAttribute("aria-label", color);
        box.appendChild(button);
    });
}

drawHorizontal();
drawVertical();
fillPalette("palette1", [
    "#000000", "#e4003c", "#005ca8", "#009c84", "#e8640a", "#e00434", "#1c24b4",
    "#009840", "#800080", "#a80008", "#d8a478", "#ffdc00", "#fcc400", "#8cccc0",
    "#ff6040", "#f0a474", "#ffffff", "#44546c", "#ff0000", "#f8ecd8", "#c8ccd8"
]);
fillPalette("palette2", [
    "#221f20", "#404040", "#585858", "#6c6c70", "#808284", "#929498", "#a8a8ac",
    "#bcbcbc", "#d0d2d8", "#e6e6e6", "#ffffff", "#2e3192", "#00a8f0", "#00a650",
    "#fff000", "#ee1c24", "#ec008c", "#a04484", "#f88418", "#f8a8a8", "#806860"
]);
```
